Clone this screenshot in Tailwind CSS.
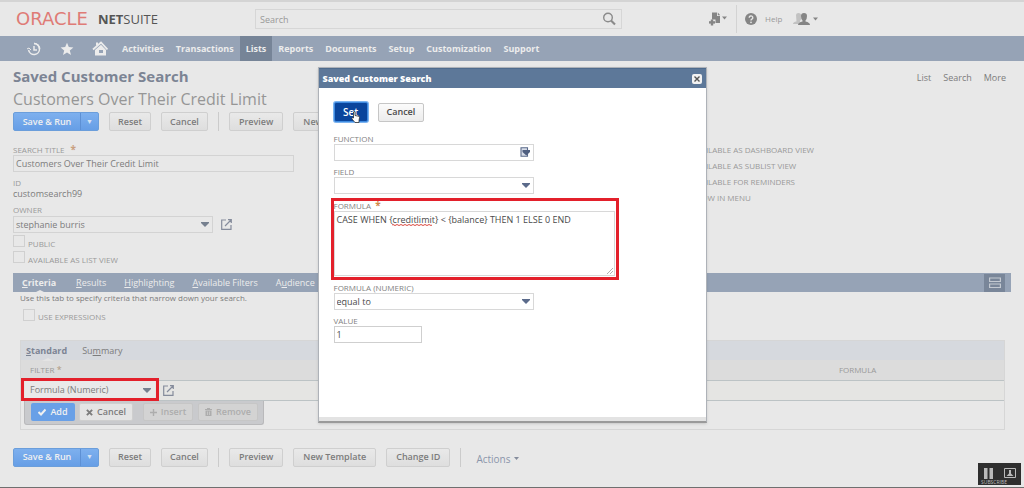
<!DOCTYPE html>
<html lang="en">
<head>
<meta charset="utf-8">
<title>Saved Customer Search</title>
<script src="https://cdn.jsdelivr.net/npm/@tailwindcss/browser@4"></script>
</head>
<body class="relative flex min-h-screen flex-col overflow-x-hidden border-t-2 border-b border-t-[#d4d4d4] border-b-[#6f6f6f] bg-[#e8e8e8] font-['Open_Sans','Noto_Sans',sans-serif] text-[9px] leading-3 text-[#7c7c7c]">

<header class="flex h-[34px] shrink-0 items-center">
  <a href="#" class="flex w-[255px] shrink-0 items-center gap-[10px] pl-4">
    <span class="font-['DejaVu_Sans',sans-serif] text-[18px] leading-5 text-[#df7b76]">ORACLE</span>
    <span class="text-[13px] leading-5 text-[#555]"><b>NET</b>SUITE</span>
  </a>
  <form class="flex h-5 w-[367px] items-center border border-[#d6d6d6] pr-1" role="search">
    <input aria-label="Search" placeholder="Search" class="h-full min-w-0 flex-1 px-1 text-[9px] outline-none placeholder:text-[#989898]">
    <button type="button" aria-label="Run search">
      <svg class="size-4" viewBox="0 0 16 16" fill="none" stroke="#8b8b8b"><circle cx="7" cy="6.500" r="4.300" stroke-width="1.400"/><path d="M10 9.500l4 4" stroke-width="2.200"/></svg>
    </button>
  </form>
  <div class="ml-[86px] flex h-7 items-center">
    <button aria-label="Create new" class="flex w-7 items-center">
      <svg class="h-4 w-5" viewBox="0 0 20 16" fill="#858585"><path d="M4 1.500h5v3.500h3v7H7.500V8.500H4z"/><path d="M9.800 1.500l2.400 2.800H9.800z"/><path d="M1 10.200h6v2.400H1z"/><path d="M2.800 8.500h2.400v6H2.800z"/><path d="M14 5.500h5L16.500 8.500z"/></svg>
    </button>
    <span class="h-full w-px bg-[#d3d3d3]"></span>
    <a href="#" class="ml-2 flex items-center gap-2 text-[8px] text-[#999]">
      <svg class="size-3" viewBox="0 0 12 12"><circle cx="6" cy="6" r="6" fill="#858585"/><path d="M4.200 4.700a1.800 1.700 0 1 1 2.700 1.400Q6 6.600 6 7.500" fill="none" stroke="#e8e8e8" stroke-width="1.400"/><circle cx="6" cy="9.300" r=".9" fill="#e8e8e8"/></svg>Help
    </a>
    <button aria-label="User menu" class="ml-[10px]">
      <svg class="h-4 w-[26px]" viewBox="0 0 26 16"><path d="M4 4q0-2 2.500-2t3 3-1.500 5v3H1q0-2 3.500-2.500z" fill="#c2c2c2"/><path d="M9 5q0-3 3-3t3 3-1.500 4.500v1Q18 11.500 18 14H6q0-2.500 4.500-3.500v-1Q9 8 9 5z" fill="#858585"/><path d="M21 6.500h5L23.500 9.500z" fill="#858585"/></svg>
    </button>
  </div>
</header>

<nav class="flex h-[25px] shrink-0 items-center bg-[#96a3b6] pl-[26px] text-[9px] font-bold text-[#ececec]">
  <a href="#" aria-label="Recent" class="w-[33px]"><svg class="size-4" viewBox="0 0 16 16" fill="none" stroke="#ececec" stroke-width="1.500"><path d="M8 2.500a5.500 5.500 0 1 1-5.400 6.500M8 5v4h3"/><path d="M8 2.500a5.500 5.500 0 0 1 5.500 5.500"/><path d="M1 8l2-1 2 2" stroke-width="1"/></svg></a>
  <a href="#" aria-label="Favorites" class="w-[33px]"><svg class="size-4" viewBox="0 0 16 16" fill="#ececec"><path d="M8 1.700l1.800 4.400 4.600.3-3.600 3 1.200 4.700L8 11.500l-4 2.600 1.200-4.700-3.600-3 4.600-.3z"/></svg></a>
  <a href="#" aria-label="Home" class="w-6"><svg class="size-4" viewBox="0 0 16 16"><path d="M1 8.500L9 1.500l6.500 7" fill="none" stroke="#ececec" stroke-width="1.800"/><path d="M3 9l6-5.300L14 9v5.500H3z" fill="#ececec"/><path d="M4 1.500h2v3H4z" fill="#ececec"/><path d="M7 9h4v3H7z" fill="#96a3b6"/></svg></a>
  <a href="#" class="px-[6px]">Activities</a>
  <a href="#" class="px-[6px]">Transactions</a>
  <a href="#" class="flex h-full items-center bg-[#768497] px-[6px]">Lists</a>
  <a href="#" class="px-[6px]">Reports</a>
  <a href="#" class="px-[6px]">Documents</a>
  <a href="#" class="px-[6px]">Setup</a>
  <a href="#" class="px-[6px]">Customization</a>
  <a href="#" class="px-[6px]">Support</a>
</nav>

<main class="flex flex-col px-[13px]">
  <div class="mt-[5px] flex h-5 items-center justify-between pr-[5px]">
    <h1 class="text-[15px] font-bold text-[#7c8494]">Saved Customer Search</h1>
    <div class="flex gap-3 pt-1"><a href="#">List</a><a href="#">Search</a><a href="#">More</a></div>
  </div>
  <h2 class="mt-[3px] text-[16px] leading-5 text-[#969696]">Customers Over Their Credit Limit</h2>

  <div class="mt-[3px] flex h-[19px] items-stretch gap-[10px] font-semibold">
    <div class="flex w-[86px] rounded-[2px] border border-[#6b9edb] bg-linear-to-b from-[#7eb0ee] to-[#669ee6] text-[#f0f0f0]"><button class="flex-1">Save &amp; Run</button><button aria-label="More save options" class="w-[18px] border-l border-[#5d90d4] text-[7px] text-[#d5e2f3]">▼</button></div>
    <button class="rounded-[2px] border border-[#cfcfcf] bg-linear-to-b from-[#e9e9e9] to-[#dedede] px-2">Reset</button>
    <button class="rounded-[2px] border border-[#cfcfcf] bg-linear-to-b from-[#e9e9e9] to-[#dedede] px-2">Cancel</button>
    <span class="w-px bg-[#cbcbcb]"></span>
    <button class="rounded-[2px] border border-[#cfcfcf] bg-linear-to-b from-[#e9e9e9] to-[#dedede] px-[9px]">Preview</button>
    <button class="rounded-[2px] border border-[#cfcfcf] bg-linear-to-b from-[#e9e9e9] to-[#dedede] px-[9px]">New Template</button>
  </div>

  <div class="mt-[13px] flex h-[128px] gap-[382px]">
    <div class="w-[281px] shrink-0">
      <label for="title" class="block h-[11px] text-[8px] leading-[11px] text-[#999]">SEARCH TITLE <span class="ml-1 text-[10px] font-bold text-[#c9a080]">*</span></label>
      <input id="title" value="Customers Over Their Credit Limit" class="block h-[17px] w-full border border-[#d3d3d3] px-[2px]">
      <div class="mt-[5px] text-[8px] leading-[11px] text-[#999]">ID</div>
      <div class="leading-3">customsearch99</div>
      <label for="owner" class="mt-1 block text-[8px] leading-3 text-[#999]">OWNER</label>
      <div class="flex items-center gap-2">
        <div class="relative w-[200px]">
          <select id="owner" class="block h-[17px] w-full appearance-none border border-[#d3d3d3] px-[2px]"><option>stephanie burris</option></select>
          <svg class="pointer-events-none absolute top-[6px] right-1 h-[5px] w-2" viewBox="0 0 8 5" fill="#76808f"><path d="M0 0h8v1L4 5 0 1z"/></svg>
        </div>
        <a href="#" aria-label="Open owner"><svg class="size-[11px]" viewBox="0 0 11 11" fill="none" stroke="#858c9c" stroke-width="1.200"><path d="M5 1H.700v9.300H10V6M7 .700h3.300V4M10 1L4 7"/></svg></a>
      </div>
      <label class="mt-[2px] flex h-[14px] items-start gap-[3px] text-[8px] leading-[18px] text-[#999]"><input type="checkbox" class="size-3 appearance-none border border-[#d0d0d0]">PUBLIC</label>
      <label class="mt-[2px] flex h-[14px] items-start gap-[3px] text-[8px] leading-[18px] text-[#999]"><input type="checkbox" class="size-3 appearance-none border border-[#d0d0d0]">AVAILABLE AS LIST VIEW</label>
    </div>
    <div class="flex flex-col gap-[4px] text-[8px] leading-3 whitespace-nowrap text-[#999]">
      <label class="flex gap-[3px]"><input type="checkbox" class="size-3 appearance-none border border-[#d0d0d0]">AVAILABLE AS DASHBOARD VIEW</label>
      <label class="flex gap-[3px]"><input type="checkbox" class="size-3 appearance-none border border-[#d0d0d0]">AVAILABLE AS SUBLIST VIEW</label>
      <label class="flex gap-[3px]"><input type="checkbox" class="size-3 appearance-none border border-[#d0d0d0]">AVAILABLE FOR REMINDERS</label>
      <label class="flex gap-[3px]"><input type="checkbox" class="size-3 appearance-none border border-[#d0d0d0]">SHOW IN MENU</label>
    </div>
  </div>

  <div class="mt-px flex h-[19px] items-center bg-[#96a3b6] pr-[6px] pl-[9px] text-[9px] text-[#ececec]">
    <a href="#" class="relative flex h-full items-center font-bold"><span><u>C</u>riteria</span><svg class="absolute -bottom-px left-3 h-[3px] w-3" viewBox="0 0 12 3" fill="#e8e8e8"><path d="M0 3L6 0l6 3z"/></svg></a>
    <a href="#" class="ml-5"><u>R</u>esults</a>
    <a href="#" class="ml-[18px]"><u>H</u>ighlighting</a>
    <a href="#" class="ml-[18px]"><u>A</u>vailable Filters</a>
    <a href="#" class="ml-[18px]">A<u>u</u>dience</a>
    <button aria-label="Toggle layout" class="ml-auto flex h-[18px] w-[21px] items-center justify-center bg-[#798699]"><svg class="h-3 w-3" viewBox="0 0 12 12" fill="none" stroke="#c3c9d1" stroke-width="1.200"><path d="M.600 1h10.800v3.500H.600zM.600 7h10.800v3.500H.600z"/></svg></button>
  </div>
  <p class="ml-[7px] text-[8px] leading-[11px]">Use this tab to specify criteria that narrow down your search.</p>
  <label class="mt-[6px] ml-[10px] flex h-[14px] items-start gap-[3px] text-[8px] leading-4 text-[#999]"><input type="checkbox" class="size-3 appearance-none border border-[#d0d0d0]">USE EXPRESSIONS</label>

  <section class="mt-[17px] mr-[6px] ml-[7px] border border-[#d6d6d6] pb-1">
    <div class="flex h-[19px] items-center gap-[15px] bg-[#d6d9de] pl-[5px] text-[9px]">
      <a href="#" class="relative flex h-full items-center font-bold text-[#7c8494]"><span><u>S</u>tandard</span><svg class="absolute -bottom-px left-4 h-[3px] w-3" viewBox="0 0 12 3" fill="#e4e4e4"><path d="M0 3L6 0l6 3z"/></svg></a><a href="#">Su<u>m</u>mary</a>
    </div>
    <table class="w-full table-fixed border-collapse">
      <thead><tr class="h-5 bg-[#dcdcdc] text-left text-[8px] text-[#999]">
        <th class="w-[83%] border-b border-[#bcc3c5] py-0 pl-[9px] font-normal">FILTER<span class="text-[9px] text-[#b09a80]"> *</span></th><th class="border-b border-[#bcc3c5] py-0 pl-[2px] font-normal">FORMULA</th>
      </tr></thead>
      <tbody><tr class="h-5 bg-[#e5e5e3]">
        <td class="border-b border-[#bcc3c5] p-0">
          <div class="flex items-center gap-2 pl-1">
            <div class="relative w-[130px]">
              <select aria-label="Filter" class="block h-[18px] w-full appearance-none bg-[#e9e9e9] px-[5px]"><option>Formula (Numeric)</option></select>
              <svg class="pointer-events-none absolute top-[7px] right-1 h-[5px] w-2" viewBox="0 0 8 5" fill="#76808f"><path d="M0 0h8v1L4 5 0 1z"/></svg>
              <span class="pointer-events-none absolute -top-[3px] -right-1 -bottom-[2px] -left-1 border-3 border-[#e3202b]"></span>
            </div>
            <a href="#" aria-label="Open filter"><svg class="size-[11px]" viewBox="0 0 11 11" fill="none" stroke="#858c9c" stroke-width="1.200"><path d="M5 1H.700v9.300H10V6M7 .700h3.300V4M10 1L4 7"/></svg></a>
          </div>
        </td><td class="border-b border-[#bcc3c5]"></td>
      </tr></tbody>
    </table>
    <div class="ml-[3px] flex h-6 w-[240px] items-center rounded-b-[3px] border border-t-0 border-[#b9b9bb] bg-[#c9cacd] pl-[6px] font-semibold">
      <button class="flex h-[18px] w-11 items-center justify-center gap-1 rounded-[2px] bg-[#69a0e7] text-[#f0f0f0]"><svg class="size-2" viewBox="0 0 8 8" fill="none" stroke="#f0f0f0" stroke-width="2"><path d="M.500 4L3 6.500 7.500 1.500"/></svg>Add</button>
      <button class="ml-1 flex h-[18px] w-[54px] items-center justify-center gap-1 rounded-[2px] border border-[#cfcfcf] bg-[#e4e4e4]"><svg class="size-[7px]" viewBox="0 0 8 8" stroke="#7c7c7c" stroke-width="2.200"><path d="M1 1l6 6M7 1L1 7"/></svg>Cancel</button>
      <button disabled class="ml-[10px] flex h-[18px] w-[50px] items-center justify-center gap-1 rounded-[2px] border border-[#c6c6c6] bg-[#d3d3d3] text-[#adadad]"><svg class="size-[7px]" viewBox="0 0 8 8" stroke="#adadad" stroke-width="1.600"><path d="M4 0v8M0 4h8"/></svg>Insert</button>
      <button disabled class="ml-[5px] flex h-[18px] w-[60px] items-center justify-center gap-1 rounded-[2px] border border-[#c6c6c6] bg-[#d3d3d3] text-[#adadad]"><svg class="h-2 w-[7px]" viewBox="0 0 7 8" fill="#adadad"><path d="M0 1h2V0h3v1h2v1H0zM.500 2.500h6V8h-6z"/><path d="M2.500 3.500v3.500M4.500 3.500v3.500" stroke="#d3d3d3" stroke-width=".7"/></svg>Remove</button>
    </div>
  </section>

  <div class="mt-[18px] flex h-[19px] items-stretch gap-[10px] font-semibold">
    <div class="flex w-[86px] rounded-[2px] border border-[#6b9edb] bg-linear-to-b from-[#7eb0ee] to-[#669ee6] text-[#f0f0f0]"><button class="flex-1">Save &amp; Run</button><button aria-label="More save options" class="w-[18px] border-l border-[#5d90d4] text-[7px] text-[#d5e2f3]">▼</button></div>
    <button class="rounded-[2px] border border-[#cfcfcf] bg-linear-to-b from-[#e9e9e9] to-[#dedede] px-2">Reset</button>
    <button class="rounded-[2px] border border-[#cfcfcf] bg-linear-to-b from-[#e9e9e9] to-[#dedede] px-2">Cancel</button>
    <span class="w-px bg-[#cbcbcb]"></span>
    <button class="rounded-[2px] border border-[#cfcfcf] bg-linear-to-b from-[#e9e9e9] to-[#dedede] px-[9px]">Preview</button>
    <button class="rounded-[2px] border border-[#cfcfcf] bg-linear-to-b from-[#e9e9e9] to-[#dedede] px-[9px]">New Template</button>
    <button class="rounded-[2px] border border-[#cfcfcf] bg-linear-to-b from-[#e9e9e9] to-[#dedede] px-[9px]">Change ID</button>
    <span class="w-px bg-[#cbcbcb]"></span>
    <button class="ml-[5px] flex items-center gap-[3px] pt-[3px] text-[10px] font-normal text-[#8b96ab]">Actions<svg class="h-[3px] w-[5px]" viewBox="0 0 5 3" fill="#858c9c"><path d="M0 0h5L2.500 3z"/></svg></button>
  </div>
</main>

<div role="dialog" aria-labelledby="dlg" class="absolute inset-x-0 top-[65px] mx-auto flex h-[356px] w-[389px] flex-col border border-b-2 border-[#aeb2b8] border-b-[#9a9a9a] bg-white text-[#4a4a4a] shadow">
  <div class="flex h-5 items-center justify-between border-t border-[#4f6b8d] bg-[#5d7899] px-1">
    <h2 id="dlg" class="text-[9px] font-extrabold text-white">Saved Customer Search</h2>
    <button aria-label="Close" class="flex size-[10px] items-center justify-center rounded-[2px] bg-[#f2f2f2]"><svg class="size-[6px]" viewBox="0 0 6 6" stroke="#555" stroke-width="1.400"><path d="M.500.500l5 5M5.500.500l-5 5"/></svg></button>
  </div>
  <form class="flex flex-1 flex-col px-[15px] pt-[14px]">
    <div class="flex items-center gap-[10px] text-[9px] font-semibold">
      <button type="button" class="relative h-5 w-[34px] rounded-[2px] border border-[#3f8be0] bg-[#0a459c] text-[10px] text-white ring-1 ring-[#7db4f0]">Set
        <svg class="absolute top-[8px] left-[16px] h-3 w-[9px]" viewBox="0 0 9 12" fill="#fff" stroke="#333" stroke-width=".8"><path d="M2.500 7V1q.8-1 1.500 0v3.500l4 .8q.7.300.6 1L8 9.500V11.500H4L1 8q-.5-1 .3-1.300z"/></svg>
      </button>
      <button type="button" class="h-[19px] rounded-[2px] border border-[#c6c6c6] bg-linear-to-b from-[#fbfbfb] to-[#ececec] px-2">Cancel</button>
    </div>
    <label for="fn" class="mt-[11px] text-[8px] leading-[11px] text-[#828282]">FUNCTION</label>
    <div class="relative w-[200px]">
      <select id="fn" class="block h-[17px] w-full appearance-none border border-[#d8d8d8] px-[2px]"><option></option></select>
      <svg class="pointer-events-none absolute top-[3px] right-[4px] size-[10px]" viewBox="0 0 10 10"><path d="M1 .700h6.500v8.600H1z" fill="#d7dde8" stroke="#5b6b8b" stroke-width="1.100"/><path d="M2.500 3h7.500v2L6.300 8.500 2.500 5z" fill="#4f5f80"/></svg>
    </div>
    <label for="fld" class="mt-[5px] text-[8px] leading-[11px] text-[#828282]">FIELD</label>
    <div class="relative w-[200px]">
      <select id="fld" class="block h-[17px] w-full appearance-none border border-[#d8d8d8] px-[2px]"><option></option></select>
      <svg class="pointer-events-none absolute top-[6px] right-1 h-[5px] w-2" viewBox="0 0 8 5" fill="#5b6b8b"><path d="M0 0h8v1L4 5 0 1z"/></svg>
    </div>
    <div class="relative mt-[6px] flex w-[281px] flex-col">
      <label for="formula" class="h-[11px] text-[8px] leading-[11px] text-[#828282]">FORMULA <span class="ml-[2px] text-[10px] font-bold text-[#d08a4a]">*</span></label>
      <textarea id="formula" spellcheck="false" class="block h-[65px] w-full resize-none border border-[#d8d8d8] px-[2px] pt-[2px] outline-none">CASE WHEN {creditlimit} &lt; {balance} THEN 1 ELSE 0 END</textarea>
      <svg class="pointer-events-none absolute top-[24px] left-[58px] h-[2px] w-[41px]" viewBox="0 0 41 2" fill="none" stroke="#d9483f" stroke-width="1"><path d="M0 1q1-1 2 0t2 0 2 0 2 0 2 0 2 0 2 0 2 0 2 0 2 0 2 0 2 0 2 0 2 0 2 0 2 0 2 0 2 0 2 0 2 0"/></svg>
      <svg class="pointer-events-none absolute right-[2px] bottom-[2px] size-[6px]" viewBox="0 0 6 6" stroke="#a8a8a8" stroke-width=".9"><path d="M0 6L6 0M3 6L6 3"/></svg>
      <span class="pointer-events-none absolute -top-[2px] -right-1 -bottom-1 -left-[3px] border-3 border-[#e3202b]"></span>
    </div>
    <label for="op" class="mt-[6px] text-[8px] leading-[11px] text-[#828282]">FORMULA (NUMERIC)</label>
    <div class="relative w-[200px]">
      <select id="op" class="block h-[17px] w-full appearance-none border border-[#d8d8d8] px-[2px]"><option>equal to</option></select>
      <svg class="pointer-events-none absolute top-[6px] right-1 h-[5px] w-2" viewBox="0 0 8 5" fill="#5b6b8b"><path d="M0 0h8v1L4 5 0 1z"/></svg>
    </div>
    <label for="val" class="mt-[5px] text-[8px] leading-[11px] text-[#828282]">VALUE</label>
    <input id="val" value="1" class="h-[17px] w-[88px] border border-[#cfcfcf] px-[2px]">
  </form>
  <div class="h-1 bg-[#e3e3e3]"></div>
</div>

<div class="absolute right-[3px] bottom-[2px] flex h-[22px] w-[43px] items-start justify-center gap-[11px] bg-[#2e2e2e] pt-[5px]">
  <button aria-label="Pause"><svg class="h-[11px] w-[9px]" viewBox="0 0 9 11" fill="#b9b9b9"><path d="M0 0h3.500v11H0zM5.500 0H9v11H5.500z"/></svg></button>
  <button aria-label="Present"><svg class="h-[11px] w-3" viewBox="0 0 12 11"><path d="M.500.500h11v9H.500z" fill="none" stroke="#b9b9b9"/><path d="M5 2h2v3.500l2.500 2.500h-7L5 5.500z" fill="#b9b9b9"/></svg></button>
  <span class="absolute bottom-0 left-[3px] text-[5px] leading-[5px] text-[#bfbfbf]">SUBSCRIBE</span>
</div>
</body>
</html>
